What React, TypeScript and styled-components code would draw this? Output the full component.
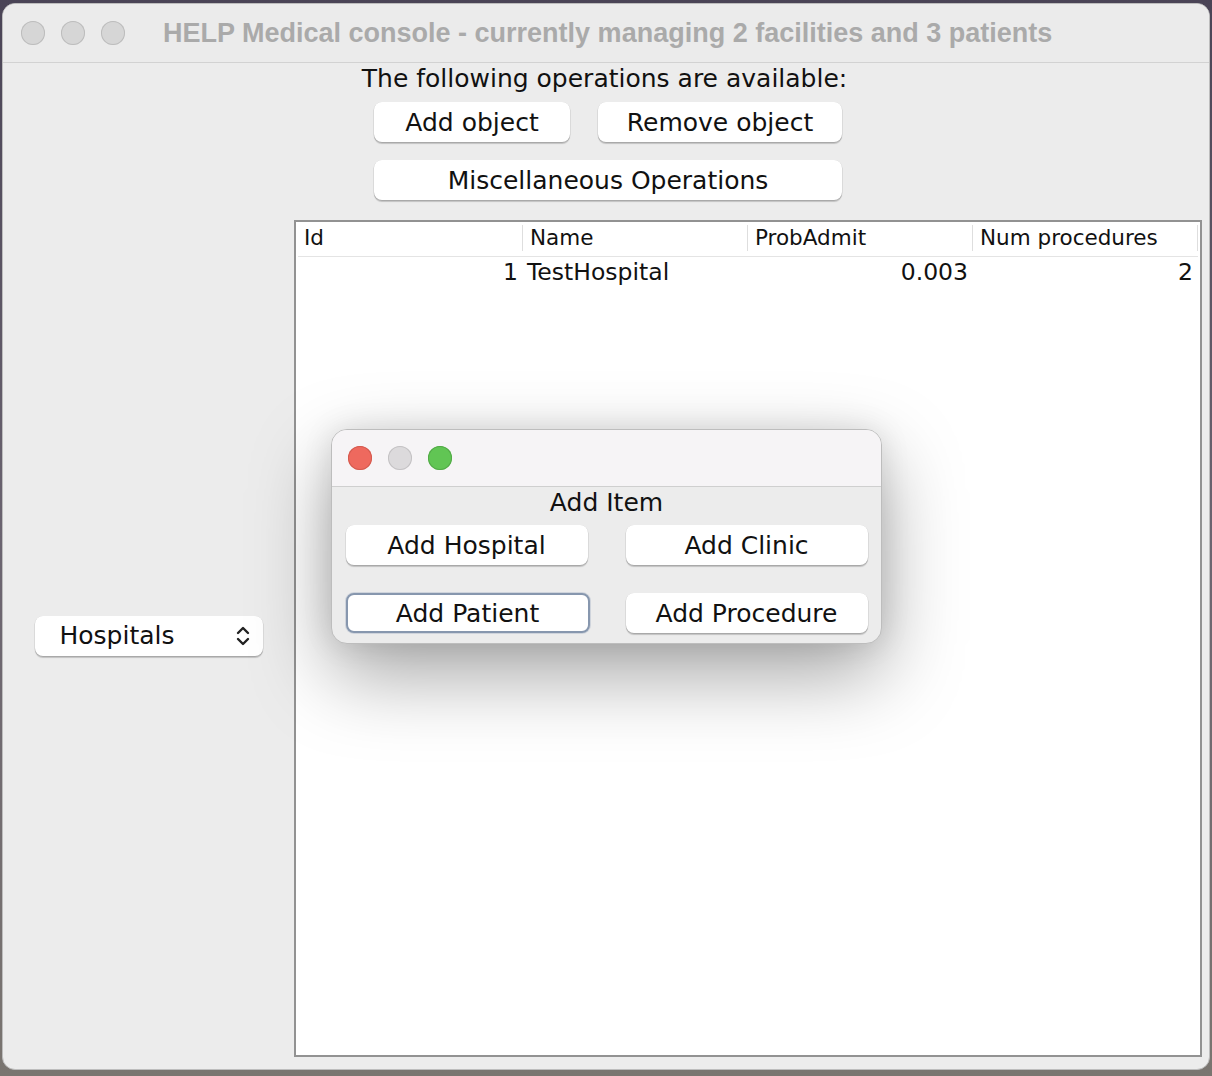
import styled, { createGlobalStyle } from "styled-components";

const GlobalStyle = createGlobalStyle`
  html, body {
    margin: 0;
    padding: 0;
    height: 100%;
  }
  body {
    background: linear-gradient(180deg, #4a4456 0%, #6b6470 50%, #7a7570 100%);
    font-family: "DejaVu Sans", "Noto Sans", sans-serif;
    overflow: hidden;
  }
`;

const UI_FONT = `"DejaVu Sans", "Noto Sans", sans-serif`;

const Window = styled.div`
  position: relative;
  margin: 3px 2px 0 2px;
  height: 1067px;
  box-sizing: border-box;
  background: #ececec;
  border: 1px solid #bdbdbd;
  border-radius: 13px;
  display: flex;
  flex-direction: column;
  overflow: hidden;
`;

const TitleBar = styled.div`
  height: 58px;
  flex-shrink: 0;
  display: flex;
  align-items: center;
  padding-left: 18px;
  border-bottom: 1px solid #d2d2d2;
  background: #ebebeb;
`;

const Lights = styled.div`
  display: flex;
  gap: 16px;
`;

const Light = styled.span<{ $color: string; $edge: string }>`
  width: 24px;
  height: 24px;
  border-radius: 50%;
  background: ${(p) => p.$color};
  box-shadow: inset 0 0 0 1px ${(p) => p.$edge};
  display: block;
`;

const Title = styled.div`
  margin-left: 38px;
  font-family: "Liberation Sans", Arial, sans-serif;
  font-weight: bold;
  font-size: 27px;
  color: #aaaaaa;
  white-space: nowrap;
`;

const Body = styled.div`
  flex: 1;
  display: flex;
  flex-direction: column;
  padding-bottom: 12px;
  min-height: 0;
`;

const Ops = styled.div`
  display: flex;
  flex-direction: column;
  align-items: center;
  padding-bottom: 20px;
`;

const OpsLabel = styled.div`
  font-family: ${UI_FONT};
  font-size: 25px;
  color: #111;
  line-height: 32px;
  margin: 0 3px 7px 0;
`;

const ButtonRow = styled.div`
  display: flex;
  gap: 28px;
  margin: 0 0 18px 4px;
  &:last-child {
    margin-bottom: 0;
  }
`;

const Button = styled.button<{ $w: number; $focus?: boolean }>`
  width: ${(p) => p.$w}px;
  height: 40px;
  box-sizing: border-box;
  background: #ffffff;
  border: ${(p) => (p.$focus ? "2px solid #8797ae" : "none")};
  border-radius: 8px;
  box-shadow: ${(p) =>
    p.$focus
      ? "0 0 0 1px rgba(120,140,170,0.25)"
      : "0 0.5px 0 0.5px rgba(0,0,0,0.12), 0 1.5px 1px rgba(0,0,0,0.18)"};
  font-family: ${UI_FONT};
  font-size: 25px;
  color: #111;
  padding: 0;
  line-height: 1;
  display: flex;
  align-items: center;
  justify-content: center;
`;

const Main = styled.div`
  flex: 1;
  display: flex;
  min-height: 0;
  padding-right: 9px;
`;

const Side = styled.div`
  width: 291px;
  flex-shrink: 0;
  display: flex;
  align-items: center;
  justify-content: center;
  padding-bottom: 6px;
`;

const Combo = styled.div`
  width: 228px;
  height: 40px;
  box-sizing: border-box;
  background: #fff;
  border-radius: 8px;
  box-shadow: 0 0.5px 0 0.5px rgba(0,0,0,0.12), 0 1.5px 1px rgba(0,0,0,0.18);
  display: flex;
  align-items: center;
  justify-content: space-between;
  padding: 0 12px 0 25px;
  font-family: ${UI_FONT};
  font-size: 25px;
  color: #111;
`;

const Scroll = styled.div`
  flex: 1;
  border: 2px solid #929292;
  background: #fff;
  display: flex;
  flex-direction: column;
  padding: 0 2px;
`;

const Row = styled.div<{ $head?: boolean }>`
  display: grid;
  grid-template-columns: repeat(4, 225px);
  height: ${(p) => (p.$head ? 34 : 29)}px;
  border-bottom: ${(p) => (p.$head ? "1px solid #e4e4e4" : "none")};
`;

const HeadCell = styled.div<{ $first?: boolean }>`
  font-family: ${UI_FONT};
  font-size: 21.5px;
  color: #111;
  display: flex;
  align-items: center;
  padding-left: ${(p) => (p.$first ? 6 : 7)}px;
  border-right: 1px solid #dedede;
  margin: 3px 0 5px;
  line-height: 1;
  white-space: nowrap;
`;

const Cell = styled.div<{ $right?: boolean }>`
  font-family: ${UI_FONT};
  font-size: 23.5px;
  color: #111;
  display: flex;
  align-items: center;
  justify-content: ${(p) => (p.$right ? "flex-end" : "flex-start")};
  padding: ${(p) => (p.$right ? "0 5px 0 0" : "0 0 0 4px")};
`;

const Dialog = styled.div`
  position: absolute;
  left: 328px;
  top: 425px;
  width: 551px;
  height: 215px;
  box-sizing: border-box;
  border: 1px solid #bdbdbd;
  border-radius: 16px;
  background: #ececec;
  box-shadow: 0 30px 80px rgba(0, 0, 0, 0.36), 0 0 30px rgba(0, 0, 0, 0.1);
  overflow: hidden;
  display: flex;
  flex-direction: column;
`;

const DialogBar = styled.div`
  height: 56px;
  flex-shrink: 0;
  background: #f6f4f6;
  border-bottom: 1px solid #cfcfcf;
  display: flex;
  align-items: center;
  padding-left: 16px;
`;

const DialogBody = styled.div`
  display: flex;
  flex-direction: column;
  align-items: center;
`;

const DialogTitle = styled.div`
  font-family: ${UI_FONT};
  font-size: 25px;
  color: #111;
  line-height: 28px;
  margin: 2px 0 8px;
`;

const DialogGrid = styled.div`
  display: grid;
  grid-template-columns: 242px 242px;
  column-gap: 38px;
  row-gap: 28px;
`;

function Chevrons() {
  return (
    <svg width="16" height="24" viewBox="0 0 16 24" fill="none" stroke="#222" strokeWidth="2.4" strokeLinecap="round" strokeLinejoin="round">
      <path d="M3 9 L8 4 L13 9" />
      <path d="M3 15 L8 20 L13 15" />
    </svg>
  );
}

export default function App() {
  return (
    <>
      <GlobalStyle />
      <Window>
        <TitleBar>
          <Lights>
            <Light $color="#d6d6d6" $edge="#bdbdbd" />
            <Light $color="#d6d6d6" $edge="#bdbdbd" />
            <Light $color="#d6d6d6" $edge="#bdbdbd" />
          </Lights>
          <Title>HELP Medical console - currently managing 2 facilities and 3 patients</Title>
        </TitleBar>
        <Body>
          <Ops>
            <OpsLabel>The following operations are available:</OpsLabel>
            <ButtonRow>
              <Button $w={196}>Add object</Button>
              <Button $w={244}>Remove object</Button>
            </ButtonRow>
            <ButtonRow>
              <Button $w={468}>Miscellaneous Operations</Button>
            </ButtonRow>
          </Ops>
          <Main>
            <Side>
              <Combo>
                <span>Hospitals</span>
                <Chevrons />
              </Combo>
            </Side>
            <Scroll>
              <Row $head>
                <HeadCell $first>Id</HeadCell>
                <HeadCell>Name</HeadCell>
                <HeadCell>ProbAdmit</HeadCell>
                <HeadCell>Num procedures</HeadCell>
              </Row>
              <Row>
                <Cell $right>1</Cell>
                <Cell>TestHospital</Cell>
                <Cell $right>0.003</Cell>
                <Cell $right>2</Cell>
              </Row>
            </Scroll>
          </Main>
        </Body>
        <Dialog>
          <DialogBar>
            <Lights>
              <Light $color="#ee695e" $edge="#d35a4f" />
              <Light $color="#dcdadc" $edge="#c4c2c4" />
              <Light $color="#61c554" $edge="#52a947" />
            </Lights>
          </DialogBar>
          <DialogBody>
            <DialogTitle>Add Item</DialogTitle>
            <DialogGrid>
              <Button $w={242}>Add Hospital</Button>
              <Button $w={242}>Add Clinic</Button>
              <Button $w={244} $focus>Add Patient</Button>
              <Button $w={242}>Add Procedure</Button>
            </DialogGrid>
          </DialogBody>
        </Dialog>
      </Window>
    </>
  );
}
